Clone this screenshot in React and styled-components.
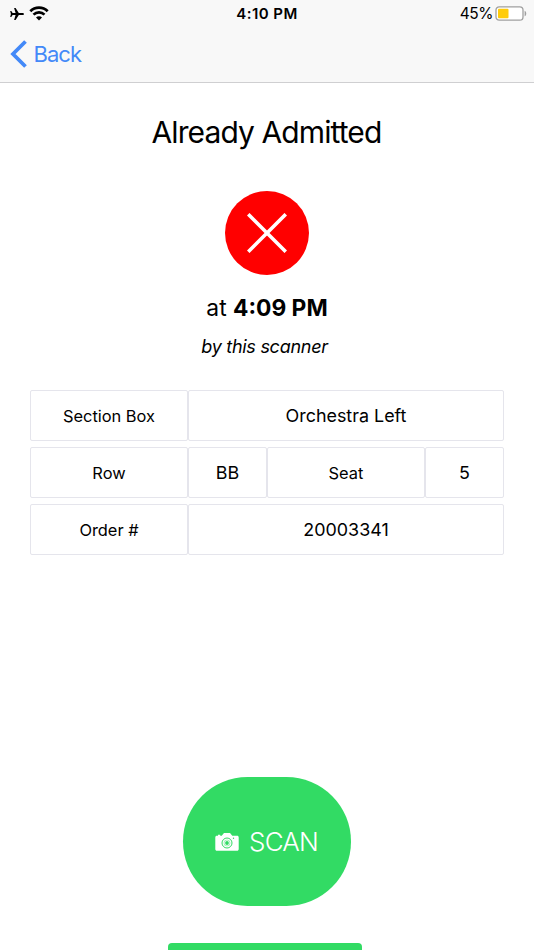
import React from 'react'
import styled, { createGlobalStyle } from 'styled-components'

const GlobalStyle = createGlobalStyle`
  * {
    box-sizing: border-box;
  }

  body {
    margin: 0;
    background-color: white;
    color: black;
    font-family: Inter, 'Liberation Sans', sans-serif;
  }

  svg {
    display: block;
    flex: none;
  }
`

const Screen = styled.div`
  height: 950px;
  overflow: hidden;
  display: flex;
  flex-direction: column;
`

const Header = styled.header`
  flex: none;
  height: 83px;
  background-color: #f8f8f8;
  border-bottom: 1px solid #cfcfd1;
`

const StatusBar = styled.div`
  height: 27px;
  padding: 0 7px 0 9px;
  display: grid;
  grid-template-columns: 1fr auto 1fr;
  align-items: center;
`

const Signal = styled.div`
  display: flex;
  align-items: center;
  gap: 5px;
`

const Clock = styled.div`
  margin-right: 2px;
  font-size: 15px;
  font-weight: 600;
  letter-spacing: 0.45px;
`

const Battery = styled.div`
  display: flex;
  align-items: center;
  justify-content: flex-end;
  gap: 2px;
  font-size: 15.5px;
  letter-spacing: -0.5px;
`

const BackButton = styled.button`
  height: 54px;
  padding: 0 0 0 10px;
  border: none;
  background: none;
  display: flex;
  align-items: center;
  gap: 5.5px;
  color: #4389f8;
  font-family: inherit;
  font-size: 22px;
  letter-spacing: -0.95px;
`

const Content = styled.main`
  flex: 1;
  display: flex;
  flex-direction: column;
  align-items: center;
`

const Title = styled.h1`
  margin: 30px 1px 0 0;
  height: 38px;
  line-height: 38px;
  font-size: 30px;
  font-weight: 400;
  letter-spacing: -0.9px;
`

const StatusIcon = styled.div`
  width: 84px;
  height: 84px;
  margin-top: 39.5px;
  border-radius: 50%;
  background-color: #ff0000;
  display: flex;
  align-items: center;
  justify-content: center;
`

const Time = styled.p`
  margin: 18.5px 0 0;
  height: 30px;
  line-height: 30px;
  font-size: 22.8px;
`

const Scanner = styled.p`
  margin: 12px 5px 0 0;
  height: 24px;
  line-height: 24px;
  font-size: 18px;
  font-style: italic;
  letter-spacing: -0.27px;
`

const Details = styled.div`
  width: 474px;
  margin-top: 31px;
  display: grid;
  grid-template-columns: 158px 79px 158px 79px;
  grid-auto-rows: 51px;
  row-gap: 6px;
`

const Cell = styled.div`
  grid-column: span ${(props) => props.$span || 1};
  padding-top: ${(props) => (props.$label ? '1px' : '0')};
  border: 1px solid #e5e5ec;
  border-radius: 2px;
  display: flex;
  align-items: center;
  justify-content: center;
  font-size: ${(props) => (props.$label ? '16.4px' : '17.9px')};
`

const ScanButton = styled.button`
  width: 168px;
  height: 129px;
  margin-top: 222px;
  padding: 0 1px 0 0;
  border: none;
  border-radius: 65px;
  background-color: #32db64;
  color: white;
  display: flex;
  align-items: center;
  justify-content: center;
  gap: 10px;
  font-family: inherit;
  font-size: 26px;
  font-weight: 350;
  letter-spacing: -0.8px;
`

const BottomButton = styled.div`
  width: 194px;
  height: 44px;
  margin: 37px 5px 0 0;
  flex: none;
  border-radius: 4px;
  background-color: #32db64;
`

const PlaneIcon = () => (
  <svg width='15' height='14' viewBox='0 0 15 14'>
    <path d='M15 7c0 .7-.7 1.100-1.600 1.100H9.800L6.600 13H5.100l1.500-4.900H3.600L2.300 9.900H1.200L1.900 7l-.7-2.900h1.100l1.300 1.800h3L5.100 1h1.500l3.200 4.900h3.600C14.300 5.900 15 6.300 15 7z' />
  </svg>
)

const WifiIcon = () => (
  <svg width='20' height='15' viewBox='0 0 20 15'>
    <g fill='none' stroke='black' strokeWidth='2.7'>
      <path d='M1.3 5.3a12.3 12.3 0 0 1 17.4 0' />
      <path d='M4.5 8.6a7.8 7.8 0 0 1 11 0' />
    </g>
    <path d='M10 14.4l-3-3a4.2 4.2 0 0 1 6 0z' />
  </svg>
)

const BatteryIcon = () => (
  <svg width='32' height='15' viewBox='0 0 32 15'>
    <rect x='1' y='.8' width='27' height='13.4' rx='3.2' fill='white' stroke='#a0a0a0' strokeWidth='1.3' />
    <rect x='3' y='2.8' width='10.5' height='9.4' rx='1' fill='#ffcc0a' />
    <path d='M29.6 4.7c2.2.6 2.2 5 0 5.6z' fill='#a0a0a0' />
  </svg>
)

const BackIcon = () => (
  <svg width='18' height='28' viewBox='0 0 18 28'>
    <path d='M15.5 1.5L3 14l12.5 12.5' fill='none' stroke='#4389f8' strokeWidth='3.8' />
  </svg>
)

const CloseIcon = () => (
  <svg width='40' height='40' viewBox='0 0 40 40'>
    <path d='M2.5 2.5l35 35M37.5 2.5l-35 35' stroke='white' strokeWidth='3.6' strokeLinecap='square' />
  </svg>
)

const CameraIcon = () => (
  <svg width='24' height='18' viewBox='0 0 24 18'>
    <path
      fill='white'
      d='M2 2.700h1v-.9h2.200v.9h1.500L8.600.4c.2-.2.400-.3.700-.3h5.400c.3 0 .5.1.7.3l1.900 2.300H22c1.100 0 1.700.7 1.700 1.700v11.500c0 1.100-.6 1.800-1.700 1.800H2C.9 17.700.3 17 .3 15.900V4.400C.3 3.400.9 2.700 2 2.700z'
    />
    <circle cx='12' cy='10' r='5' fill='none' stroke='#32db64' strokeWidth='1' />
    <circle cx='12' cy='10' r='3' fill='none' stroke='#32db64' strokeWidth='.4' />
    <circle cx='12' cy='10' r='1.9' fill='#32db64' />
    <circle cx='18.5' cy='5.2' r='.7' fill='#32db64' />
  </svg>
)

const App = () => {
  return (
    <Screen>
      <GlobalStyle />
      <Header>
        <StatusBar>
          <Signal>
            <PlaneIcon />
            <WifiIcon />
          </Signal>
          <Clock>4:10 PM</Clock>
          <Battery>
            <span>45%</span>
            <BatteryIcon />
          </Battery>
        </StatusBar>
        <BackButton>
          <BackIcon />
          <span>Back</span>
        </BackButton>
      </Header>
      <Content>
        <Title>Already Admitted</Title>
        <StatusIcon>
          <CloseIcon />
        </StatusIcon>
        <Time>
          at <strong>4:09 PM</strong>
        </Time>
        <Scanner>by this scanner</Scanner>
        <Details>
          <Cell $label>Section Box</Cell>
          <Cell $span={3}>Orchestra Left</Cell>
          <Cell $label>Row</Cell>
          <Cell>BB</Cell>
          <Cell $label>Seat</Cell>
          <Cell>5</Cell>
          <Cell $label>Order #</Cell>
          <Cell $span={3}>20003341</Cell>
        </Details>
        <ScanButton>
          <CameraIcon />
          <span>SCAN</span>
        </ScanButton>
        <BottomButton />
      </Content>
    </Screen>
  )
}

export default App
